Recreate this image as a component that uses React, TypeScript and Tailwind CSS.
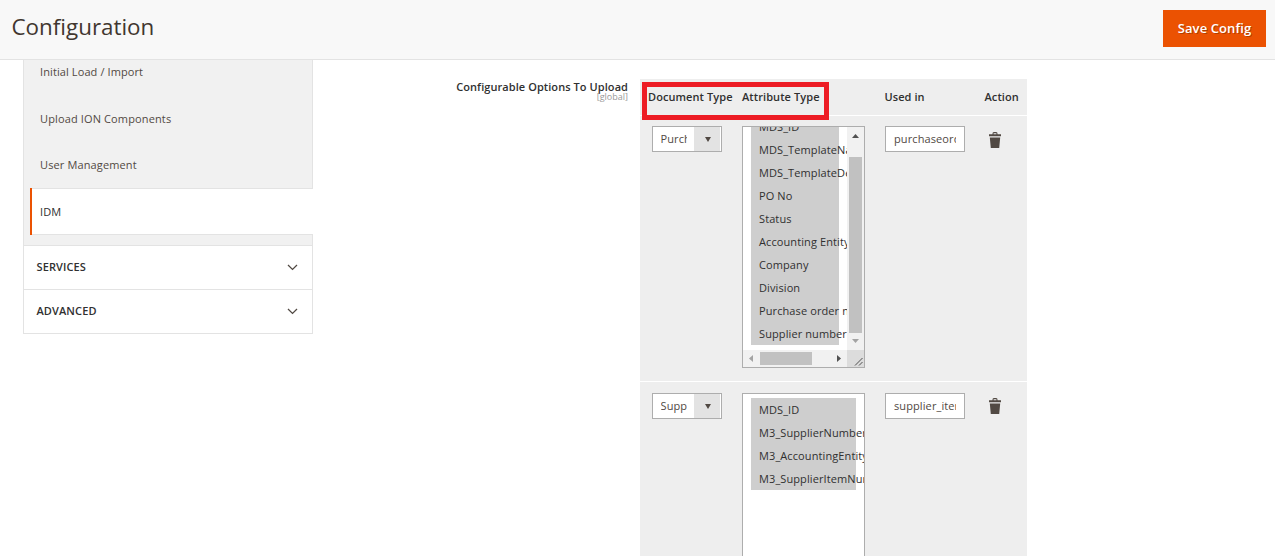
import React from "react";

const firstOptions = [
  "MDS_ID",
  "MDS_TemplateName",
  "MDS_TemplateDescription",
  "PO No",
  "Status",
  "Accounting Entity",
  "Company",
  "Division",
  "Purchase order number",
  "Supplier number",
];

const secondOptions = [
  "MDS_ID",
  "M3_SupplierNumber",
  "M3_AccountingEntity",
  "M3_SupplierItemNumber",
];

function Chevron() {
  return (
    <svg width="11" height="7" viewBox="0 0 11 7" className="mr-[14px]" fill="none">
      <path d="M1 1l4.5 4.4L10 1" stroke="#514943" strokeWidth="1.3" />
    </svg>
  );
}

function Trash() {
  return (
    <svg width="12" height="16" viewBox="0 0 12 16" fill="#514943">
      <path d="M0 2.2h3.4Q3.4 0 4.9 0h2.2q1.5 0 1.5 2.2H12v2H0zM4.6 1.2v1h2.8v-1z" fillRule="evenodd" />
      <path d="M.8 5.5h10.4L10.2 16H1.8z" />
    </svg>
  );
}

function Dropdown({ value }: { value: string }) {
  return (
    <div className="flex h-[26px] w-[70px] border border-[#adadad] bg-white pl-[7.5px]">
      <span className="w-[26px] overflow-hidden leading-[24px] whitespace-nowrap">{value}</span>
      <span className="ml-[7px] flex w-[26px] items-center justify-center bg-[#e3e3e3]">
        <svg width="6" height="5" viewBox="0 0 6 5" className="ml-[2px]">
          <path d="M0 0h6L3 5z" fill="#514943" />
        </svg>
      </span>
    </div>
  );
}

function TextBox({ value }: { value: string }) {
  return (
    <div className="h-[26px] w-[80px] border border-[#adadad] bg-white px-2">
      <div className="overflow-hidden leading-[24px] whitespace-nowrap">{value}</div>
    </div>
  );
}

function Option({ label }: { label: string }) {
  return <div className="h-[23px] bg-[#cecece] pl-2 leading-[23px] whitespace-nowrap text-[#303030]">{label}</div>;
}

function ScrollingList() {
  return (
    <div className="flex h-[242px] w-[123px] flex-col border border-[#adadad] bg-white">
      <div className="flex h-[223px]">
        <div className="flex w-[104px] flex-col justify-end overflow-hidden pr-2 pb-[5px] pl-2">
          {firstOptions.map((o) => (
            <div key={o} className="shrink-0">
              <Option label={o} />
            </div>
          ))}
        </div>
        <div className="flex w-[17px] flex-col items-center bg-[#f1f1f1]">
          <svg width="7" height="4" viewBox="0 0 7 4" className="mt-[7px]">
            <path d="M0 4h7L3.5 0z" fill="#505050" />
          </svg>
          <div className="mt-[19px] h-[176px] w-[13px] bg-[#c1c1c1]" />
          <svg width="7" height="4" viewBox="0 0 7 4" className="mt-[6px]">
            <path d="M0 0h7L3.5 4z" fill="#a3a3a3" />
          </svg>
        </div>
      </div>
      <div className="flex h-[17px]">
        <div className="flex w-[104px] items-center bg-[#f1f1f1]">
          <svg width="4" height="7" viewBox="0 0 4 7" className="ml-[6px]">
            <path d="M4 0v7L0 3.5z" fill="#a3a3a3" />
          </svg>
          <div className="ml-[7px] h-[13px] w-[52px] bg-[#c1c1c1]" />
          <svg width="4" height="7" viewBox="0 0 4 7" className="ml-[25px]">
            <path d="M0 0v7l4-3.5z" fill="#505050" />
          </svg>
        </div>
        <div className="h-[17px] w-[17px] bg-[#dcdcdc]">
          <svg width="17" height="17" viewBox="0 0 17 17">
            <path d="M8 15.5L15.5 8M12 15.5l3.5-3.5" stroke="#505050" strokeWidth="1" />
          </svg>
        </div>
      </div>
    </div>
  );
}

export default function App() {
  return (
    <div className="h-[556px] w-[1275px] overflow-hidden bg-white font-['Open_Sans',sans-serif] text-[11px] tracking-[0.1px] text-[#514943]">
      <header className="flex h-[60px] items-start justify-between border-b border-[#e3e3e3] bg-[#f8f8f8] pr-[9px] pl-[11.5px]">
        <h1 className="mt-[11px] text-[22.4px] leading-[32px] tracking-normal text-[#41362f]">Configuration</h1>
        <button className="mt-[10px] h-[37px] w-[103px] bg-[#eb5202] text-[13px] font-semibold text-white [text-shadow:1px_1px_0_rgba(0,0,0,0.25)]">
          Save Config
        </button>
      </header>
      <div className="flex">
        <nav className="ml-[23px] h-[274px] w-[290px] shrink-0">
          <div className="h-[128px] border-x border-[#e3e3e3] bg-[#f1f1f1] pl-4">
            <div className="h-[24px] leading-[24px]">Initial Load / Import</div>
            <div className="mt-[23px] h-[24px] leading-[24px] tracking-[0.13px]">Upload ION Components</div>
            <div className="mt-[22px] h-[24px] leading-[24px] tracking-[0.13px]">User Management</div>
          </div>
          <div className="flex h-[47px] border-l border-[#e3e3e3] bg-[#f1f1f1] pl-[6px]">
            <div className="w-[2px] bg-[#eb5202]" />
            <div className="flex-1 border-y border-[#e3e3e3] bg-white pl-2 leading-[46px] text-[#303030]">IDM</div>
          </div>
          <div className="h-[10px] border-x border-[#e3e3e3] bg-[#f1f1f1]" />
          <div className="flex h-[44px] items-center justify-between border-x border-t border-[#e3e3e3] pl-[12.5px] font-semibold text-[#303030]">
            SERVICES
            <Chevron />
          </div>
          <div className="flex h-[45px] items-center justify-between border border-[#e3e3e3] pl-[12.5px] font-semibold text-[#303030]">
            ADVANCED
            <Chevron />
          </div>
        </nav>
        <div className="mt-[19px] w-[315px] shrink-0 text-right">
          <div className="text-[11px] leading-[16px] font-semibold tracking-[0.07px] text-[#303030]">Configurable Options To Upload</div>
          <div className="-mt-[4px] text-[9px] leading-[11px] tracking-normal text-[#999]">[global]</div>
        </div>
        <section className="relative mt-[19px] ml-[12px] w-[387px] shrink-0">
          <div className="flex h-[36px] bg-[#eee] pl-[8px] leading-[36px] font-semibold tracking-[0.08px] whitespace-nowrap text-[#303030]">
            <span className="w-[94px]">Document Type</span>
            <span className="w-[142.5px]">Attribute Type</span>
            <span className="w-[100px]">Used in</span>
            <span>Action</span>
          </div>
          <div className="mt-px flex h-[265px] items-start bg-[#eee] pt-[10px] pl-[12px]">
            <Dropdown value="Purchase Order" />
            <div className="ml-[20px]">
              <ScrollingList />
            </div>
            <div className="ml-[20px]">
              <TextBox value="purchaseorder" />
            </div>
            <div className="mt-[6px] ml-[24px]">
              <Trash />
            </div>
          </div>
          <div className="mt-px flex h-[174px] items-start overflow-hidden bg-[#eee] pt-[11px] pl-[12px]">
            <Dropdown value="Supplier" />
            <div className="ml-[20px] h-[242px] w-[123px] shrink-0 overflow-hidden border border-[#adadad] bg-white px-2 pt-[4px]">
              <div className="w-[105px]">
                {secondOptions.map((o) => (
                  <Option key={o} label={o} />
                ))}
              </div>
            </div>
            <div className="ml-[20px]">
              <TextBox value="supplier_item" />
            </div>
            <div className="mt-[5px] ml-[24px]">
              <Trash />
            </div>
          </div>
          <div className="absolute top-[3px] left-[2px] h-[38px] w-[187px] border-[5px] border-[#ed1c24]" />
        </section>
      </div>
    </div>
  );
}
